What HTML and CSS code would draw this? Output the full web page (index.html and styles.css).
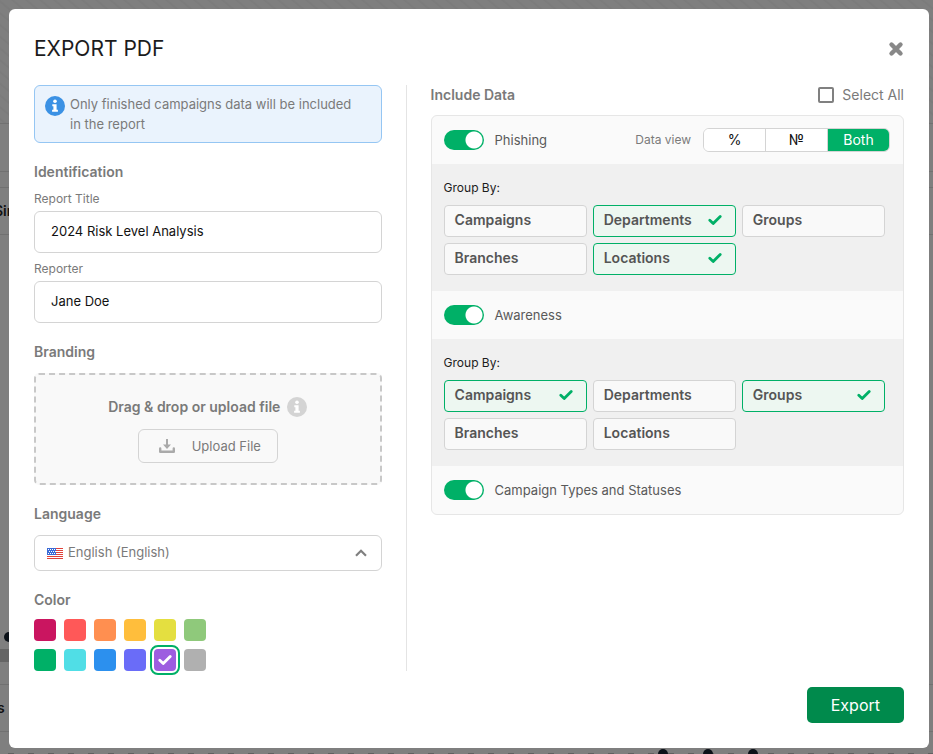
FILE: index.html
```html
<!DOCTYPE html>
<html lang="en">
<head>
<meta charset="utf-8">
<title>Export PDF</title>
<link rel="stylesheet" href="styles.css">
</head>
<body>
<svg class="symbols" aria-hidden="true">
  <symbol id="check" viewBox="0 0 14 12"><path d="M1.8 6.2 5.2 9.5 12.2 2.4" fill="none" stroke="currentColor" stroke-width="2.8" stroke-linecap="round" stroke-linejoin="round"/></symbol>
  <symbol id="info" viewBox="0 0 20 20"><circle cx="10" cy="10" r="10" fill="currentColor"/><circle cx="10" cy="5.3" r="1.8" fill="#fff"/><path d="M7.3 8.2h4.3v5.6h1.3v2H7.1v-2h1.3v-3.6H7.3z" fill="#fff"/></symbol>
</svg>

<div class="backdrop" aria-hidden="true">
  <svg class="rings" width="100%" height="123">
    <defs><pattern id="stripes" width="9" height="9" patternUnits="userSpaceOnUse" patternTransform="rotate(40)"><path d="M0 1h9" stroke="#777"/></pattern></defs>
    <rect width="100%" height="123" fill="url(#stripes)"/>
  </svg>
  <i class="rule rule-a"></i><i class="rule rule-b"></i><i class="rule rule-c"></i><i class="rule rule-d"></i><i class="rule rule-e"></i><i class="rule rule-f"></i>
  <i class="band"></i>
  <span class="peek peek-top">Sin</span>
  <span class="peek peek-bottom">s</span>
  <i class="dot dot-left"></i>
  <div class="ticks"></div>
  <i class="dot dot-a"></i><i class="dot dot-b"></i><i class="dot dot-c"></i>
</div>

<main class="modal" role="dialog" aria-labelledby="dialog-title">
  <header class="modal-head">
    <h1 id="dialog-title">EXPORT PDF</h1>
    <button class="close" type="button" aria-label="Close">
      <svg width="16" height="16" viewBox="0 0 16 16"><path d="M3.500 3.500l9 9M12.500 3.500l-9 9" stroke="currentColor" stroke-width="4.400" stroke-linecap="round"/></svg>
    </button>
  </header>

  <form class="columns">
    <section class="settings">
      <p class="notice"><svg class="info-icon"><use href="#info"/></svg><span>Only finished campaigns data will be included in the report</span></p>

      <h2>Identification</h2>
      <div class="field">
        <label for="title">Report Title</label>
        <input id="title" type="text" value="2024 Risk Level Analysis">
      </div>
      <div class="field">
        <label for="reporter">Reporter</label>
        <input id="reporter" type="text" value="Jane Doe">
      </div>

      <h2>Branding</h2>
      <div class="dropzone">
        <p class="drop-title">Drag &amp; drop or upload file <svg class="info-icon"><use href="#info"/></svg></p>
        <button class="upload" type="button">
          <svg width="18" height="16" viewBox="0 0 18 16"><path d="M8 1h2v5.500h3L9 11 5 6.500h3z" fill="#aaa"/><path d="M2.200 10.500v3.300h13.600v-3.300" fill="none" stroke="#aaa" stroke-width="2.400" stroke-linecap="round" stroke-linejoin="round"/></svg>
          Upload File
        </button>
      </div>

      <h2><label for="language">Language</label></h2>
      <div class="select">
        <svg class="flag" viewBox="0 0 16 11"><path fill="#fff" d="M0 0h16v11H0z"/><path d="M0 .5h16M0 2.500h16M0 4.500h16M0 6.500h16M0 8.500h16M0 10.500h16" stroke="#e0413a"/><path fill="#3b6bd6" d="M0 0h9v7H0z"/><path d="M1 1.500h8M2 3.500h7M1 5.500h8" stroke="#fff" stroke-dasharray="1 1"/></svg>
        <select id="language"><option>English (English)</option></select>
        <svg class="chevron" viewBox="0 0 12 8"><path d="M1 6.800 6 1.800l5 5" fill="none" stroke="#808080" stroke-width="2.200"/></svg>
      </div>

      <fieldset class="colors">
        <legend>Color</legend>
        <div class="swatches">
          <input type="radio" name="color" aria-label="Crimson" class="c1">
          <input type="radio" name="color" aria-label="Red" class="c2">
          <input type="radio" name="color" aria-label="Orange" class="c3">
          <input type="radio" name="color" aria-label="Amber" class="c4">
          <input type="radio" name="color" aria-label="Yellow" class="c5">
          <input type="radio" name="color" aria-label="Light green" class="c6">
          <input type="radio" name="color" aria-label="Green" class="c7">
          <input type="radio" name="color" aria-label="Cyan" class="c8">
          <input type="radio" name="color" aria-label="Blue" class="c9">
          <input type="radio" name="color" aria-label="Indigo" class="c10">
          <span class="picked"><input type="radio" name="color" aria-label="Purple" class="c11" checked><svg class="check"><use href="#check"/></svg></span>
          <input type="radio" name="color" aria-label="Gray" class="c12">
        </div>
      </fieldset>
    </section>

    <section class="include">
      <div class="include-head">
        <h2>Include Data</h2>
        <label class="select-all"><input type="checkbox"> Select All</label>
      </div>

      <div class="panel">
        <div class="row">
          <label class="toggle"><input type="checkbox" checked> Phishing</label>
          <div class="view" role="group" aria-labelledby="view-label">
            <span id="view-label">Data view</span>
            <div class="segments">
              <button type="button">%</button>
              <button type="button">№</button>
              <button type="button" class="active">Both</button>
            </div>
          </div>
        </div>
        <div class="groups">
          <p>Group By:</p>
          <div class="chips">
            <button type="button">Campaigns</button>
            <button type="button" class="on">Departments<svg class="check"><use href="#check"/></svg></button>
            <button type="button">Groups</button>
            <button type="button">Branches</button>
            <button type="button" class="on">Locations<svg class="check"><use href="#check"/></svg></button>
          </div>
        </div>
        <div class="row">
          <label class="toggle"><input type="checkbox" checked> Awareness</label>
        </div>
        <div class="groups">
          <p>Group By:</p>
          <div class="chips">
            <button type="button" class="on">Campaigns<svg class="check"><use href="#check"/></svg></button>
            <button type="button">Departments</button>
            <button type="button" class="on">Groups<svg class="check"><use href="#check"/></svg></button>
            <button type="button">Branches</button>
            <button type="button">Locations</button>
          </div>
        </div>
        <div class="row">
          <label class="toggle"><input type="checkbox" checked> Campaign Types and Statuses</label>
        </div>
      </div>
    </section>
  </form>

  <footer class="modal-foot"><button class="export" type="button">Export</button></footer>
</main>
</body>
</html>
```
FILE: styles.css
```css
* { box-sizing: border-box; margin: 0; }

:root {
  --green: #00b067;
  --text: #7a7a7a;
  --line: #d4d4d4;
}

body {
  font: 13px/20px Inter, "Open Sans", sans-serif;
  color: var(--text);
  background: #7f7f7f;
  min-height: 100vh;
  overflow: hidden;
}

button, input, select { font: inherit; color: inherit; }
.symbols { position: absolute; width: 0; height: 0; }

/* Dimmed page behind the dialog */
.backdrop { position: absolute; inset: 0; overflow: hidden; }
.backdrop > * { position: absolute; }
.rings { top: 0; left: 0; }
.rule { left: 0; right: 0; height: 1px; background: #717171; }
.rule-a { top: 123px; }
.rule-b { top: 171px; }
.rule-c { top: 187px; }
.rule-d { top: 234px; }
.rule-e { top: 684px; }
.rule-f { top: 731px; }
.band { top: 649px; left: 0; width: 20px; height: 13px; background: #656565; }
.peek { left: -6px; color: #111; font-size: 14px; font-weight: 600; }
.peek-top { top: 201px; }
.peek-bottom { top: 698px; left: -3px; }
.dot { width: 10px; height: 10px; border-radius: 50%; background: #0b1118; }
.dot-left { top: 632px; left: 4px; }
.dot-a, .dot-b, .dot-c { top: 749px; }
.dot-a { left: 658px; }
.dot-b { left: 703px; }
.dot-c { left: 748px; }
.ticks { left: 8px; right: 0; top: 753px; height: 1px; background: repeating-linear-gradient(90deg, #606060 0 6px, transparent 6px 20px); }

.modal {
  position: relative;
  display: flex;
  flex-direction: column;
  min-height: calc(100vh - 15px);
  margin: 9px 4px 6px 9px;
  padding: 25px;
  background: #fff;
  border-radius: 6px;
}

.modal-head { display: flex; justify-content: space-between; align-items: center; height: 30px; margin-bottom: 21px; }
h1 { font-size: 21px; line-height: 30px; font-weight: 400; color: #1c1c1c; }
.close { display: flex; padding: 0; border: 0; background: none; color: #888; }

.columns { display: grid; grid-template-columns: 373fr 498fr; flex: 1; align-items: start; }
.settings { padding-right: 24px; border-right: 1px solid #e4e4e4; height: 586px; }
.include { padding-left: 24px; }

h2, legend { font-size: 14px; line-height: 20px; font-weight: 600; color: var(--text); padding: 0; }

.notice {
  display: flex;
  gap: 5px;
  padding: 8px 24px 8px 10px;
  min-height: 58px;
  margin-bottom: 19px;
  background: #eaf3fd;
  border: 1px solid #95c6f3;
  border-radius: 6px;
}
.info-icon { flex: none; width: 20px; height: 20px; color: #3b91e4; }
.notice .info-icon { margin-top: 2px; }

.field { margin-top: 8px; }
h2 + .field { margin-top: 9px; }
.field label { display: block; font-size: 12px; line-height: 16px; margin-bottom: 4px; }
.field input { display: block; width: 100%; height: 42px; padding: 0 16px 2px; border: 1px solid var(--line); border-radius: 6px; color: #111; background: #fff; }

.field + h2 { margin-top: 19px; }
.dropzone {
  display: flex;
  flex-direction: column;
  align-items: center;
  gap: 12px;
  margin: 11px 0 19px;
  padding: 22px 0 20px;
  border: 2px dashed #c8c8c8;
  border-radius: 5px;
  background: #f9f9f9;
}
.drop-title { display: flex; align-items: center; gap: 7px; font-size: 14px; font-weight: 600; }
.drop-title .info-icon { color: #d4d4d4; }
.upload { display: flex; align-items: center; gap: 16px; height: 34px; padding: 0 16px 0 19px; border: 1px solid var(--line); border-radius: 6px; background: #f9f9f9; }

.select { position: relative; display: flex; align-items: center; margin: 11px 0 19px; }
.select select { appearance: none; width: 100%; height: 36px; padding: 0 33px 2px; border: 1px solid var(--line); border-radius: 6px; background: #fff; }
.flag { position: absolute; left: 13px; width: 16px; height: 11px; pointer-events: none; }
.chevron { position: absolute; right: 15px; width: 12px; height: 8px; pointer-events: none; }

.colors { border: 0; padding: 0; }
.swatches { display: grid; grid-template-columns: repeat(6, 22px); gap: 8px; margin-top: 9px; }
.swatches input { appearance: none; display: block; width: 22px; height: 22px; border-radius: 4px; }
.picked { position: relative; }
.picked input { outline: 2px solid var(--green); outline-offset: 2px; }
.picked .check { position: absolute; left: 4px; top: 5px; color: #fff; }
.check { width: 14px; height: 12px; }
.c1 { background: #ca1560; }
.c2 { background: #ff5858; }
.c3 { background: #ff8f50; }
.c4 { background: #ffbe3c; }
.c5 { background: #e4df40; }
.c6 { background: #8fc97b; }
.c7 { background: #00b067; }
.c8 { background: #50dee6; }
.c9 { background: #2c90ee; }
.c10 { background: #6a6cf8; }
.c11 { background: #9d5de0; }
.c12 { background: #b0b0b0; }

.include-head { display: flex; justify-content: space-between; margin-bottom: 10px; }
.select-all { display: flex; align-items: center; gap: 8px; font-size: 14px; }
.select-all input { appearance: none; width: 16px; height: 16px; border: 2px solid #808080; border-radius: 2px; }

.panel { border: 1px solid #e6e6e6; border-radius: 6px; background: #fafafa; overflow: hidden; }
.row { display: flex; align-items: center; justify-content: space-between; height: 48px; padding: 0 13px 0 12px; }
.toggle { display: flex; align-items: center; gap: 11px; color: #595959; }
.toggle input { appearance: none; width: 40px; height: 20px; border-radius: 10px; background: radial-gradient(circle at 30px 10px, #fff 8px, var(--green) 9px); }
.view { display: flex; align-items: center; gap: 12px; font-size: 12px; }
.segments { display: grid; grid-template-columns: 62px 62px 61px; height: 24px; border: 1px solid var(--line); border-radius: 6px; overflow: hidden; }
.segments button { padding: 0; border: 0; border-right: 1px solid var(--line); background: #fff; color: #111; font-size: 14px; line-height: 20px; }
.segments .active { border: 0; background: var(--green); color: #fff; }

.groups { min-height: 127px; padding: 16px 18px 16px 12px; background: #f0f0f0; }
.groups p { font-size: 12px; line-height: 16px; color: #1c1c1c; margin-bottom: 9px; }
.chips { display: grid; grid-template-columns: repeat(3, 1fr); gap: 6px; }
.chips button { display: flex; align-items: center; justify-content: space-between; height: 32px; padding: 0 13px 2px 10px; border: 1px solid var(--line); border-radius: 4px; background: #f9f9f9; color: #555; font-size: 14px; font-weight: 600; }
.chips .on { border-color: var(--green); background: #edf7f1; }
.chips .check { color: var(--green); }

.modal-foot { display: flex; justify-content: flex-end; margin-top: 7px; }
.export { height: 36px; padding: 0 24px; border: 0; border-radius: 5px; background: #008a4c; color: #fff; font-size: 16px; }
```
